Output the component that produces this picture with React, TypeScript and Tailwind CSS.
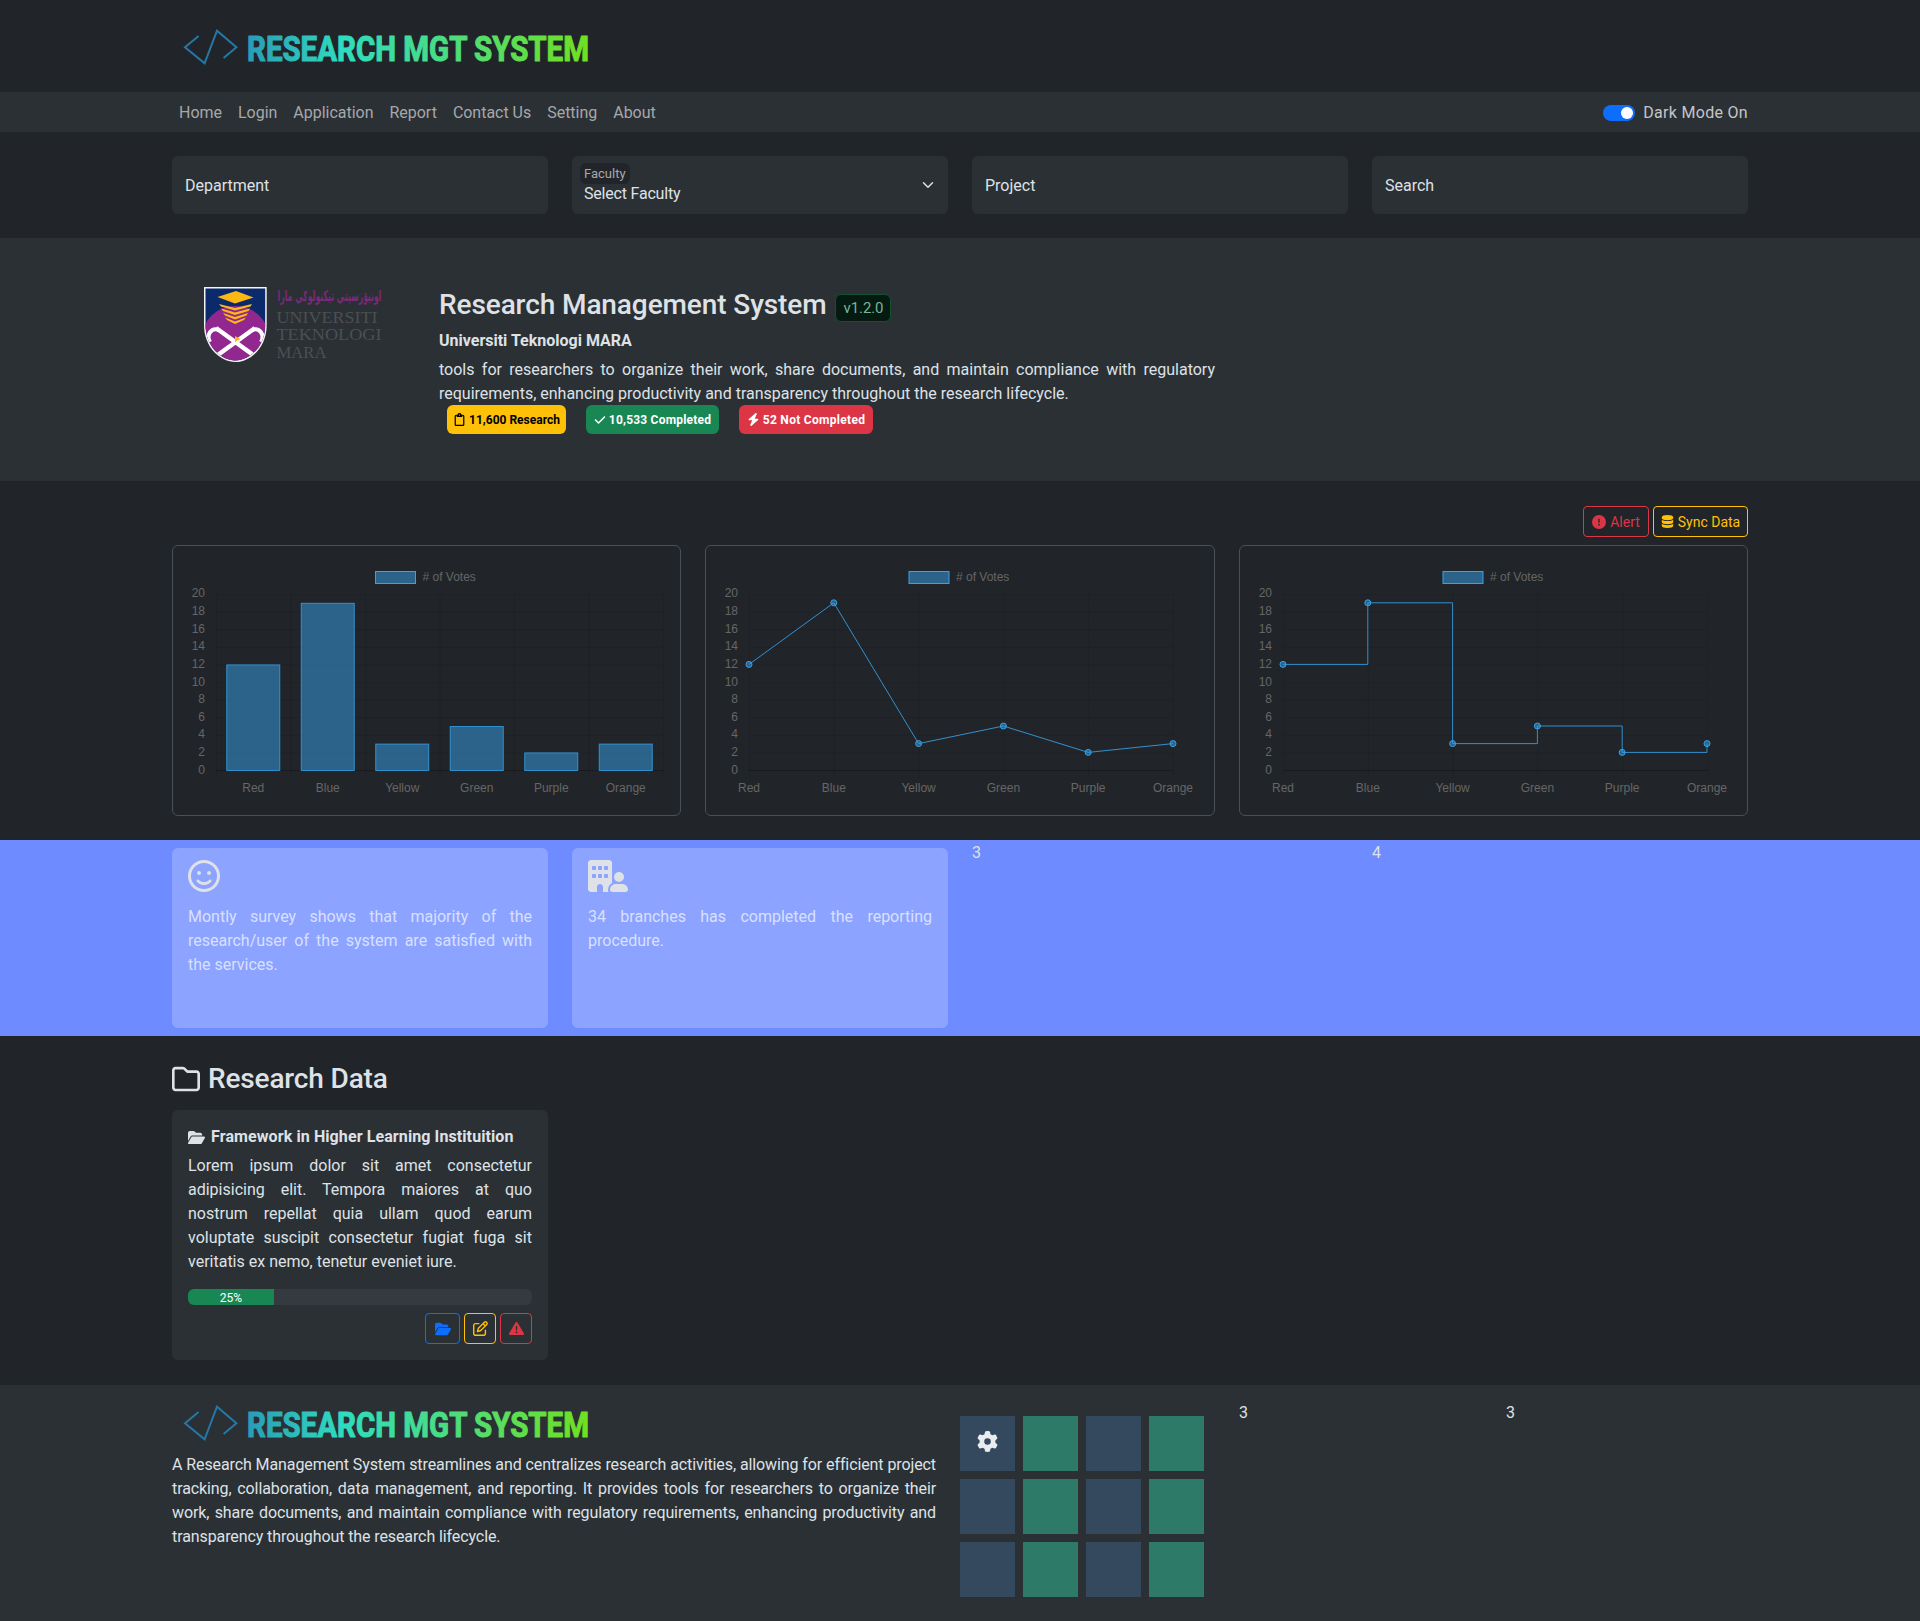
import { FaBolt, FaBuildingUser, FaCheck, FaCircleExclamation, FaDatabase, FaFolderOpen, FaGear, FaRegClipboard, FaRegFaceSmile, FaRegFolder, FaRegPenToSquare, FaTriangleExclamation } from "react-icons/fa6";

const labels = ["Red", "Blue", "Yellow", "Green", "Purple", "Orange"];
const votes = [12, 19, 3, 5, 2, 3];
const ticks = [0, 2, 4, 6, 8, 10, 12, 14, 16, 18, 20];
const navItems = ["Home", "Login", "Application", "Report", "Contact Us", "Setting", "About"];

function Logo({ id }: { id: string }) {
  return (
    <svg width="520" height="48" viewBox="0 0 520 48" className="block">
      <defs>
        <linearGradient id={id} x1="75" x2="417" y1="0" y2="0" gradientUnits="userSpaceOnUse">
          <stop offset="0" stopColor="#2a9bb8" />
          <stop offset="0.28" stopColor="#2fdcc0" />
          <stop offset="0.55" stopColor="#48dc88" />
          <stop offset="1" stopColor="#72e01e" />
        </linearGradient>
      </defs>
      <path d="M26.6 14 13 25.3 32.6 41.3 45 8.7 64.4 25.3 51.6 36" fill="none" stroke="#2577a6" strokeWidth="2" />
      <text
        x="75"
        y="39"
        textLength="342"
        lengthAdjust="spacingAndGlyphs"
        fontFamily="Roboto, sans-serif"
        fontWeight="700"
        fontSize="35"
        fill={`url(#${id})`}
        stroke={`url(#${id})`}
        strokeWidth="1.1"
        strokeLinejoin="round"
      >
        RESEARCH MGT SYSTEM
      </text>
    </svg>
  );
}

function UitmLogo() {
  return (
    <svg width="232" height="100" viewBox="0 0 232 100" className="block">
      <defs>
        <clipPath id="crest">
          <path d="M10.5 13.5H70.2V50C70.2 71 55 85.5 40.4 85.5 26 85.5 10.5 71 10.5 50Z" />
        </clipPath>
      </defs>
      <path d="M9 12H71.7V50C71.7 72 56 87 40.4 87 25 87 9 72 9 50Z" fill="#f4f4f4" />
      <g clipPath="url(#crest)">
        <rect x="9" y="12" width="63" height="76" fill="#0b2a6b" />
        <ellipse cx="40.4" cy="62" rx="33" ry="31" fill="#92278f" />
        <path d="M22.5 22 41 16 58.5 22.5 40 28.5Z" fill="#fdb913" />
        <path d="M24 29 40 33 57 29 55.5 31.5 40 35.5 26 31.5Z" fill="#fdb913" />
        <path d="M26 33.5 40 37.5 55 33.5 53.5 36 40 40 28 36Z" fill="#fdb913" />
        <path d="M28 38 40 42 53 38 51.5 40.5 40 44.5 30 40.5Z" fill="#fdb913" />
        <path d="M30 42.5 40 46.5 51 42.5 49 45 40 49 32 45Z" fill="#fdb913" />
        <path d="M21 53 61 82M60 53 20 82" stroke="#fff" strokeWidth="4.5" fill="none" />
        <path d="M24 55C16 52 11 60 15 67M57 55C65 52 70 60 66 67" stroke="#fff" strokeWidth="4" fill="none" />
        <path d="M40 61 45.5 64 40 67Z" fill="#fdb913" />
      </g>
      <text transform="translate(134.5 26) scale(1 1.9)" textAnchor="middle" fontFamily="DejaVu Sans, sans-serif" fontWeight="700" fontSize="7.8" fill="#7b2a7d">
        اونيۏرسيتي تيكنولوݢي مارا
      </text>
      <g fontFamily="Liberation Serif, serif" fill="#4c4f52" fontSize="17">
        <text x="81.5" y="47.7" textLength="101" lengthAdjust="spacingAndGlyphs">UNIVERSITI</text>
        <text x="81.5" y="65" textLength="105" lengthAdjust="spacingAndGlyphs">TEKNOLOGI</text>
        <text x="81.5" y="83" textLength="50" lengthAdjust="spacingAndGlyphs">MARA</text>
      </g>
    </svg>
  );
}

function Chart({ type }: { type: "bar" | "line" | "step" }) {
  const isBar = type === "bar";
  // plot area in px, relative to the card's inner box
  const left = 43;
  const right = isBar ? 490 : 467;
  const yOf = (v: number) => 224 - v * 8.8;
  const n = isBar ? 6 : 5;
  const step = (right - left) / n;
  const xOf = (i: number) => (isBar ? left + step * (i + 0.5) : left + step * i);
  const gridX = Array.from({ length: n + 1 }, (_, i) => left + step * i);
  const legendX = isBar ? 202.5 : 203;

  let line = "";
  votes.forEach((v, i) => {
    if (i === 0) line = `M${xOf(0)} ${yOf(v)}`;
    else if (type === "line") line += `L${xOf(i)} ${yOf(v)}`;
    else line += `H${xOf(i)}V${yOf(v)}`;
  });

  return (
    <div className="h-[271px] rounded-md border border-[#495057] bg-[#212529]">
      <svg width="100%" height="269" className="block" fontFamily="Liberation Sans, Arial, sans-serif" fontSize="12" fill="#666">
        <rect x={legendX} y="25.5" width="40" height="12" fill="rgba(54,162,235,0.5)" stroke="#36a2eb" />
        <text x={legendX + 47} y="35">
          # of Votes
        </text>
        {ticks.map((t) => (
          <g key={t}>
            <line x1={left} x2={right} y1={yOf(t) + 0.5} y2={yOf(t) + 0.5} stroke={t === 0 ? "rgba(0,0,0,0.25)" : "rgba(0,0,0,0.08)"} />
            <text x={left - 11} y={yOf(t) + (t === 20 ? 3 : 3.5)} textAnchor="end">
              {t}
            </text>
          </g>
        ))}
        {gridX.map((x) => (
          <line key={x} x1={x + 0.5} x2={x + 0.5} y1="48" y2="232" stroke="rgba(0,0,0,0.08)" />
        ))}
        {labels.map((l, i) => (
          <text key={l} x={xOf(i)} y="246" textAnchor="middle">
            {l}
          </text>
        ))}
        {isBar &&
          votes.map((v, i) => (
            <rect
              key={i}
              x={xOf(i) - 26.5}
              y={yOf(v) + 0.5}
              width="53"
              height={v * 8.8}
              fill="rgba(54,162,235,0.5)"
              stroke="#36a2eb"
              strokeOpacity="0.8"
            />
          ))}
        {!isBar && <path d={line} fill="none" stroke="#36a2eb" strokeOpacity="0.85" />}
        {!isBar &&
          votes.map((v, i) => (
            <circle key={i} cx={xOf(i)} cy={yOf(v)} r="3" fill="rgba(54,162,235,0.5)" stroke="#36a2eb" />
          ))}
      </svg>
    </div>
  );
}

function Badge({ className, icon, text }: { className: string; icon: React.ReactNode; text: string }) {
  return (
    <span className={`flex h-[29px] items-center justify-center gap-[3px] rounded-md text-xs font-bold ${className}`}>
      {icon}
      {text}
    </span>
  );
}

export default function App() {
  const tiles = Array.from({ length: 12 }, (_, i) => i);

  return (
    <div className="min-h-[1621px] bg-[#212529] font-['Roboto',sans-serif] text-base leading-6 text-[#dee2e6]">
      {/* Brand */}
      <header className="h-[92px] pl-[172px] pt-[22px]">
        <Logo id="brand-top" />
      </header>

      {/* Nav */}
      <nav className="flex h-10 items-center justify-between bg-[#2b3035] pl-[179px] pr-[172px] pt-px">
        <ul className="flex gap-4 tracking-[-0.02px] text-[#a6a8aa]">
          {navItems.map((item) => (
            <li key={item}>{item}</li>
          ))}
        </ul>
        <div className="flex items-center gap-2">
          <span className="flex h-4 w-8 items-center justify-end rounded-full bg-[#0d6efd] px-0.5">
            <span className="size-3 rounded-full bg-white" />
          </span>
          <span className="tracking-[0.3px] text-[#c4c6c8]">Dark Mode On</span>
        </div>
      </nav>

      {/* Filters */}
      <section className="mx-auto grid w-[1576px] grid-cols-4 gap-6 py-6">
        <div className="flex h-[58px] items-center rounded-md bg-[#2b3035] px-[13px] pt-px">Department</div>
        <div className="relative h-[58px] rounded-md bg-[#2b3035] px-2 pt-[7px]">
          <span className="block w-fit rounded-md bg-[#212529] px-1 text-[13px] leading-[21px] text-[#a6a8aa]">Faculty</span>
          <span className="block pl-1 leading-[19px] tracking-[-0.2px]">Select Faculty</span>
          <svg width="16" height="16" viewBox="0 0 16 16" className="absolute right-[12px] top-[21px]">
            <path d="m2 5 6 6 6-6" fill="none" stroke="#dee2e6" strokeWidth="2" strokeLinecap="round" strokeLinejoin="round" transform="translate(2 2) scale(0.75)" />
          </svg>
        </div>
        <div className="flex h-[58px] items-center rounded-md bg-[#2b3035] px-[13px] pt-px">Project</div>
        <div className="flex h-[58px] items-center rounded-md bg-[#2b3035] px-[13px] pt-px">Search</div>
      </section>

      {/* Hero */}
      <section className="flex h-[243px] bg-[#2b3035] pl-[160px]">
        <div className="w-[267px] pl-[35px] pt-[37px]">
          <UitmLogo />
        </div>
        <div className="w-[800px] px-3 pt-[50px]">
          <h1 className="flex h-[34px] items-center text-[28px] font-medium leading-[34px] tracking-[-0.1px]">
            Research Management System
            <span className="ml-[9px] mt-[6px] flex h-7 w-14 items-center justify-center rounded-md border border-[#0f5132] bg-[#051b11] text-[15px] font-normal text-[#75b798]">v1.2.0</span>
          </h1>
          <p className="mt-[7px] font-bold">Universiti Teknologi MARA</p>
          <p className="mt-[5px] text-justify">
            tools for researchers to organize their work, share documents, and maintain compliance with regulatory requirements, enhancing productivity and transparency throughout the research lifecycle.
          </p>
          <div className="-mt-px ml-2 flex gap-5">
            <Badge className="w-[119px] bg-[#ffc107] text-black" icon={<FaRegClipboard className="text-[13px]" />} text="11,600 Research" />
            <Badge className="w-[133px] bg-[#198754] tracking-[0.2px] text-white" icon={<FaCheck className="text-[12px]" />} text="10,533 Completed" />
            <Badge className="w-[134px] bg-[#dc3545] tracking-[0.3px] text-white" icon={<FaBolt className="text-[13px]" />} text="52 Not Completed" />
          </div>
        </div>
      </section>

      {/* Charts */}
      <section className="mx-auto w-[1576px] pb-6 pt-[25px]">
        <div className="mb-2 flex justify-end gap-1 text-sm">
          <button className="flex h-[31px] w-[66px] items-center justify-center gap-1 rounded border border-[#dc3545] text-[#dc3545]">
            <FaCircleExclamation className="text-[14px]" />
            Alert
          </button>
          <button className="flex h-[31px] w-[95px] items-center justify-center gap-1 rounded border border-[#ffc107] text-[#ffc107]">
            <FaDatabase className="text-[13px]" />
            Sync Data
          </button>
        </div>
        <div className="grid grid-cols-3 gap-6">
          <Chart type="bar" />
          <Chart type="line" />
          <Chart type="step" />
        </div>
      </section>

      {/* Info band */}
      <section className="bg-[#6e8cff] py-2">
        <div className="mx-auto grid h-[180px] w-[1576px] grid-cols-4 gap-6">
          <div className="rounded-md bg-[#8ca3ff] px-4 pt-3 text-justify text-[#d9e0ff]">
            <FaRegFaceSmile className="size-8 text-[#dee2e6]" />
            <p className="mt-[13px]">Montly survey shows that majority of the research/user of the system are satisfied with the services.</p>
          </div>
          <div className="rounded-md bg-[#8ca3ff] px-4 pt-3 text-justify text-[#d9e0ff]">
            <FaBuildingUser className="h-8 w-10 text-[#dee2e6]" />
            <p className="mt-[13px]">34 branches has completed the reporting procedure.</p>
          </div>
          <div className="-mt-[7px] text-[#dee2e6]">3</div>
          <div className="-mt-[7px] text-[#dee2e6]">4</div>
        </div>
      </section>

      {/* Research data */}
      <section className="mx-auto w-[1576px] pb-[25px] pt-[25px]">
        <h2 className="flex h-[34px] items-center gap-2 pt-px text-[28px] font-medium leading-[34px] tracking-[-0.15px]">
          <FaRegFolder className="size-7" />
          Research Data
        </h2>
        <div className="mt-[15px] h-[250px] w-[376px] rounded-md bg-[#2b3035] px-4 pt-[15px]">
          <h3 className="flex items-center gap-[6px] font-bold tracking-[0.1px]">
            <FaFolderOpen className="text-[17px]" />
            Framework in Higher Learning Instituition
          </h3>
          <p className="mt-[5px] text-justify">
            Lorem ipsum dolor sit amet consectetur adipisicing elit. Tempora maiores at quo nostrum repellat quia ullam quod earum voluptate suscipit consectetur fugiat fuga sit veritatis ex nemo, tenetur eveniet iure.
          </p>
          <div className="mt-[15px] h-4 overflow-hidden rounded-md bg-[#343a40]">
            <div className="flex h-full w-1/4 items-center justify-center bg-[#198754] pt-px text-xs text-white">25%</div>
          </div>
          <div className="mt-2 flex justify-end gap-1">
            <button className="flex h-[31px] w-[35px] items-center justify-center rounded border border-[#0d6efd] text-[#0d6efd]">
              <FaFolderOpen className="text-[16px]" />
            </button>
            <button className="flex h-[31px] w-8 items-center justify-center rounded border border-[#ffc107] text-[#ffc107]">
              <FaRegPenToSquare className="text-[15px]" />
            </button>
            <button className="flex h-[31px] w-8 items-center justify-center rounded border border-[#dc3545] text-[#dc3545]">
              <FaTriangleExclamation className="text-[15px]" />
            </button>
          </div>
        </div>
      </section>

      {/* Footer */}
      <footer className="flex h-[236px] bg-[#2b3035] pl-[160px]">
        <div className="w-[800px] pl-3 pt-[13px]">
          <Logo id="brand-bottom" />
          <p className="mt-[7px] w-[764px] text-justify tracking-[-0.1px]">
            A Research Management System streamlines and centralizes research activities, allowing for efficient project tracking, collaboration, data management, and reporting. It provides tools for researchers to organize their work, share documents, and maintain compliance with regulatory requirements, enhancing productivity and transparency throughout the research lifecycle.
          </p>
        </div>
        <div className="w-[267px] pt-[31px]">
          <div className="grid w-[244px] grid-cols-4 gap-x-2 gap-y-2">
            {tiles.map((i) => (
              <div key={i} className={`flex h-[55px] w-[55px] justify-center pt-[15px] ${i % 2 === 0 ? "bg-[#34495e]" : "bg-[#2d7a68]"}`}>
                {i === 0 && <FaGear className="size-[21px] text-[#e9ecef]" />}
              </div>
            ))}
          </div>
        </div>
        <div className="w-[267px] px-3 pt-4">3</div>
        <div className="w-[267px] px-3 pt-4">3</div>
      </footer>
    </div>
  );
}
